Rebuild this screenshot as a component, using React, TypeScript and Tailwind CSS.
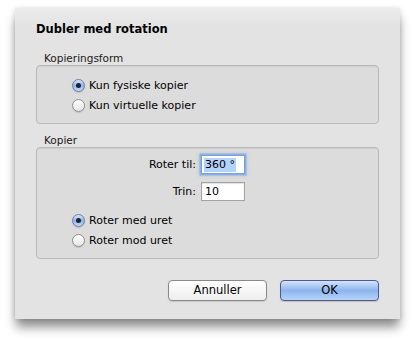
import { useState } from 'react';

type Choice = { id: string; label: string };

const kopieringsform: Choice[] = [
  { id: 'fysisk', label: 'Kun fysiske kopier' },
  { id: 'virtuel', label: 'Kun virtuelle kopier' },
];

const retning: Choice[] = [
  { id: 'med', label: 'Roter med uret' },
  { id: 'mod', label: 'Roter mod uret' },
];

function Radio({ checked, label, onClick }: { checked: boolean; label: string; onClick: () => void }) {
  return (
    <button type="button" onClick={onClick} className="flex h-[20px] items-center gap-[4px] text-left">
      {checked ? (
        <span className="flex h-[13px] w-[13px] items-center justify-center rounded-full border border-[#6f7f9c] bg-gradient-to-b from-[#d9e7fb] via-[#8fb3e8] to-[#c3dcfb] shadow-[0_1px_1px_rgba(0,0,0,0.15)]">
          <span className="h-[5px] w-[5px] rounded-full bg-[#1c2230]" />
        </span>
      ) : (
        <span className="h-[13px] w-[13px] rounded-full border border-[#8e8e8e] bg-gradient-to-b from-[#fdfdfd] to-[#e6e6e6] shadow-[0_1px_1px_rgba(0,0,0,0.12)]" />
      )}
      <span className="text-[11px] leading-[13px] text-black">{label}</span>
    </button>
  );
}

function GroupBox({ title, children, className }: { title: string; children: React.ReactNode; className: string }) {
  return (
    <div>
      <div className="pl-[8px] text-[10.5px] leading-[13px] text-[#1a1a1a]">{title}</div>
      <div className={`rounded-[4px] border border-[#b9b9b9] bg-[#dcdcdc] shadow-[inset_0_1px_1px_rgba(0,0,0,0.06)] ${className}`}>
        {children}
      </div>
    </div>
  );
}

export default function App() {
  const [form, setForm] = useState('fysisk');
  const [dir, setDir] = useState('med');

  return (
    <div className="h-[344px] w-[416px] bg-white pl-[15px] pt-[8px]" style={{ fontFamily: '"DejaVu Sans", "Noto Sans", sans-serif' }}>
      <div className="flex h-[311px] w-[385px] flex-col bg-gradient-to-b from-[#ececec] from-0% to-[#e3e3e3] to-[6%] px-[21px] pt-[14px] shadow-[0_9px_10px_-1px_rgba(0,0,0,0.45),0_0_5px_rgba(0,0,0,0.12)]">
        {/* Title */}
        <h1 className="h-[14px] text-[11.5px] font-bold leading-[14px] text-black">Dubler med rotation</h1>

        <div className="mt-[16px]">
          <GroupBox title="Kopieringsform" className="h-[59px] pl-[35px] pt-[9px]">
            {kopieringsform.map((c) => (
              <Radio key={c.id} checked={form === c.id} label={c.label} onClick={() => setForm(c.id)} />
            ))}
          </GroupBox>
        </div>

        <div className="mt-[10px]">
          <GroupBox title="Kopier" className="h-[112px] pl-[35px] pt-[7px]">
            <div className="grid grid-cols-[124px_44px] items-center gap-x-[5px] gap-y-[8px]">
              <span className="text-right text-[11px] leading-[19px] text-black">Roter til:</span>
              <div className="flex h-[19px] items-center border border-[#7aa0d8] bg-white pl-[2px] shadow-[0_0_0_1.5px_rgba(120,165,230,0.7),0_0_3px_2px_rgba(120,165,230,0.35)]">
                <span className="bg-[#b4d3fb] px-[1px] text-[11px] leading-[14px] text-black">360 °</span>
              </div>
              <span className="text-right text-[11px] leading-[19px] text-black">Trin:</span>
              <div className="flex h-[19px] items-center border border-[#a3a3a3] bg-white pl-[3px] shadow-[inset_0_1px_1px_rgba(0,0,0,0.12)]">
                <span className="text-[11px] leading-[14px] text-black">10</span>
              </div>
            </div>
            <div className="mt-[9px]">
              {retning.map((c) => (
                <Radio key={c.id} checked={dir === c.id} label={c.label} onClick={() => setDir(c.id)} />
              ))}
            </div>
          </GroupBox>
        </div>

        {/* Buttons */}
        <div className="mt-[21px] flex justify-end gap-[13px]">
          <button type="button" className="h-[21px] w-[99px] rounded-[4px] border border-[#8a8a8a] bg-gradient-to-b from-[#ffffff] to-[#eeeeee] text-[11.5px] leading-[19px] text-black shadow-[0_1px_1px_rgba(0,0,0,0.12)]">
            Annuller
          </button>
          <button type="button" className="h-[21px] w-[99px] rounded-[4px] border border-[#4c5a8c] bg-gradient-to-b from-[#d3e3fc] via-[#8db4ee] to-[#b7d4fa] text-[11.5px] leading-[19px] text-black shadow-[0_1px_1px_rgba(0,0,0,0.15)]">
            OK
          </button>
        </div>
      </div>
    </div>
  );
}
